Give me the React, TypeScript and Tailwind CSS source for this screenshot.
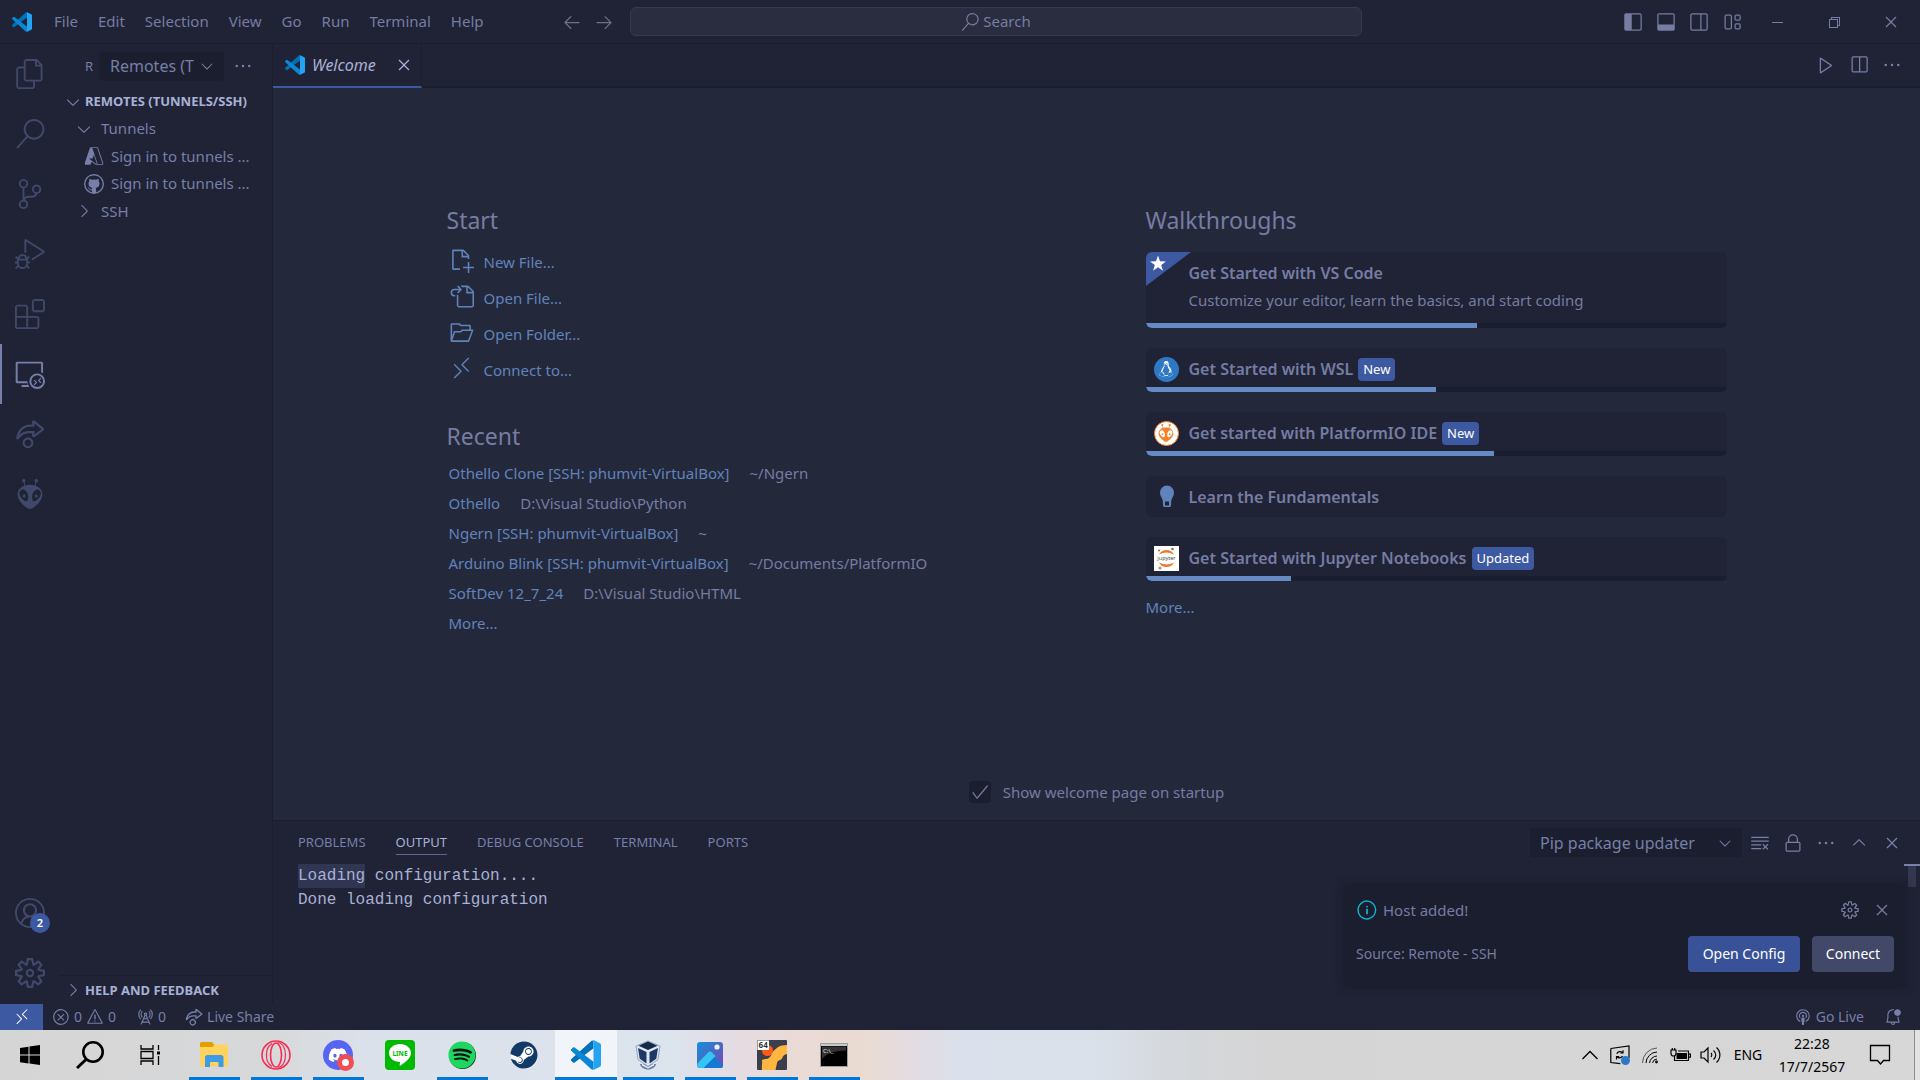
import type { ReactNode } from "react";
import {
  VscFiles, VscSearch, VscSourceControl, VscDebugAlt, VscExtensions, VscRemoteExplorer, VscLiveShare,
  VscAccount, VscSettingsGear, VscAzure, VscGithub, VscNewFile, VscGoToFile, VscFolderOpened,
  VscRemote, VscError, VscWarning, VscRadioTower, VscBroadcast, VscBellDot, VscClearAll, VscLock,
  VscEllipsis, VscChevronUp, VscChevronDown, VscChevronRight, VscClose, VscInfo, VscGear, VscPlay,
  VscSplitHorizontal, VscLayoutSidebarLeft, VscLayoutPanel, VscLayoutSidebarRightOff, VscLayout,
  VscChromeMinimize, VscChromeRestore, VscChromeClose, VscArrowLeft, VscArrowRight, VscCheck,
} from "react-icons/vsc";
import { SiPlatformio } from "react-icons/si";
import { FaSpotify, FaSteam, FaDiscord, FaLinux } from "react-icons/fa";

function CodeLogo({ className }: { className: string }) {
  return (
    <svg viewBox="0 0 24 24" className={className} aria-hidden="true">
      <path fill="#0070b8" d="M18 .6V6.55L2.93 18a1 1 0 0 1-1.28-.06L.33 16.74a1 1 0 0 1 0-1.48L16.5.5Z" />
      <path fill="#0a87d4" d="M18 23.4V17.45L2.93 6a1 1 0 0 0-1.28.06L.33 7.26a1 1 0 0 0 0 1.48L16.5 23.5Z" />
      <path fill="#23a4f2" d="M16.5.5a1.5 1.5 0 0 1 1.7-.29l4.95 2.38A1.5 1.5 0 0 1 24 3.94v16.12a1.5 1.5 0 0 1-.85 1.35L18.2 23.8a1.5 1.5 0 0 1-1.7-.3A.88.88 0 0 0 18 22.9V1.1A.88.88 0 0 0 16.5.5Z" />
    </svg>
  );
}

const menus = ["File", "Edit", "Selection", "View", "Go", "Run", "Terminal", "Help"];

function TitleBar() {
  return (
    <header className="grid h-11 shrink-0 grid-cols-[1fr_732px_558px] items-center border-b border-[#1b1e2e] text-[#767ca2]">
      <div className="flex items-center">
        <CodeLogo className="ml-3 mr-3 size-5" />
        <nav className="flex text-[15px]" aria-label="Menu">
          {menus.map((m) => (
            <button key={m} type="button" className="px-[10px]">{m}</button>
          ))}
        </nav>
        <div className="ml-auto mr-4 flex gap-3 text-xl text-[#6f7080]">
          <button type="button" aria-label="Back"><VscArrowLeft /></button>
          <button type="button" aria-label="Forward"><VscArrowRight /></button>
        </div>
      </div>
      <button type="button" className="flex h-[29px] items-center justify-center gap-1 rounded-md border border-[#363a50] bg-[#2a2d40] text-[15px]">
        <VscSearch className="text-lg" /> Search
      </button>
      <div className="flex items-center justify-end text-xl">
        <div className="mr-[6px] flex gap-[13px]">
          <button type="button" aria-label="Toggle primary side bar"><VscLayoutSidebarLeft /></button>
          <button type="button" aria-label="Toggle panel"><VscLayoutPanel /></button>
          <button type="button" aria-label="Toggle secondary side bar"><VscLayoutSidebarRightOff /></button>
          <button type="button" aria-label="Customize layout"><VscLayout /></button>
        </div>
        <button type="button" aria-label="Minimize" className="flex w-[57px] justify-center"><VscChromeMinimize className="text-base" /></button>
        <button type="button" aria-label="Restore" className="flex w-[57px] justify-center"><VscChromeRestore className="text-base" /></button>
        <button type="button" aria-label="Close" className="flex w-[58px] justify-center"><VscChromeClose className="text-base" /></button>
      </div>
    </header>
  );
}

const views = [
  { label: "Explorer", icon: <VscFiles /> },
  { label: "Search", icon: <VscSearch /> },
  { label: "Source Control", icon: <VscSourceControl /> },
  { label: "Run and Debug", icon: <VscDebugAlt /> },
  { label: "Extensions", icon: <VscExtensions /> },
  { label: "Remote Explorer", icon: <VscRemoteExplorer />, active: true },
  { label: "Live Share", icon: <VscLiveShare /> },
  { label: "PlatformIO", icon: <SiPlatformio /> },
];

function ActivityBar() {
  return (
    <nav className="flex w-[60px] shrink-0 flex-col text-3xl text-[#41496b]" aria-label="Views">
      {views.map((v) => (
        <button
          key={v.label}
          type="button"
          aria-label={v.label}
          className={v.active
            ? "flex h-[60px] items-center justify-center border-x-2 border-l-[#787fa8] border-r-transparent text-[#787fa8]"
            : "flex h-[60px] items-center justify-center"}
        >
          {v.icon}
        </button>
      ))}
      <button type="button" aria-label="Accounts" className="relative mt-auto flex h-[60px] items-center justify-center">
        <VscAccount />
        <span className="absolute right-[10px] bottom-[10px] flex size-5 items-center justify-center rounded-full bg-[#3d59a1] text-[11px] font-semibold text-white">2</span>
      </button>
      <button type="button" aria-label="Manage" className="mb-px flex h-[60px] items-center justify-center"><VscSettingsGear /></button>
    </nav>
  );
}

function SideBar() {
  return (
    <aside className="flex w-[212px] shrink-0 flex-col text-[15px] text-[#787fa8]">
      <div className="flex h-11 items-center pl-[25px]">
        <span className="w-[14px] text-[13px]">R</span>
        <div className="relative flex h-[29px] w-[125px] items-center">
          <select aria-label="Remote type" className="h-full w-full appearance-none overflow-hidden rounded-sm bg-[#1b1e2e] pr-[30px] pl-[11px] text-base">
            <option>Remotes (Tunnels/SSH)</option>
          </select>
          <VscChevronDown className="pointer-events-none absolute right-2 text-lg" />
        </div>
        <button type="button" aria-label="More actions" className="ml-[9px] text-xl"><VscEllipsis /></button>
      </div>
      <button type="button" className="flex h-[27px] items-center text-[13px] font-bold whitespace-nowrap text-[#a9b1d6]">
        <VscChevronDown className="mr-[2px] ml-[3px] text-xl text-[#787fa8]" />
        REMOTES (TUNNELS/SSH)
      </button>
      <ul className="grid h-[110px] grid-rows-4">
        <li className="flex items-center pl-[14px]"><VscChevronDown className="mr-[7px] text-xl" />Tunnels</li>
        <li className="flex items-center gap-[7px] pl-6"><VscAzure className="text-xl" />Sign in to tunnels ...</li>
        <li className="flex items-center gap-[7px] pl-6"><VscGithub className="text-xl" />Sign in to tunnels ...</li>
        <li className="flex items-center pl-[14px]"><VscChevronRight className="mr-[7px] text-xl" />SSH</li>
      </ul>
      <button type="button" className="mt-auto flex h-[29px] items-center border-t border-[#1b1e2e] text-[13px] font-bold text-[#a9b1d6]">
        <VscChevronRight className="mr-[2px] ml-[3px] text-xl text-[#787fa8]" />
        HELP AND FEEDBACK
      </button>
    </aside>
  );
}

function EditorTabs() {
  return (
    <div className="flex h-11 shrink-0 border-b-2 border-[#1b1e2e]">
      <div className="-mb-[2px] flex w-[149px] items-center border-r border-b-2 border-r-[#1b1e2e] border-b-[#3d59a1] pl-3 text-[#a9b1d6]">
        <CodeLogo className="mr-[7px] size-5" />
        <span className="text-base italic">Welcome</span>
        <button type="button" aria-label="Close tab" className="mr-[7px] ml-auto text-xl"><VscClose /></button>
      </div>
      <div className="ml-auto flex items-center gap-[13px] pr-[18px] text-xl text-[#787fa8]">
        <button type="button" aria-label="Run"><VscPlay /></button>
        <button type="button" aria-label="Split editor"><VscSplitHorizontal /></button>
        <button type="button" aria-label="More"><VscEllipsis /></button>
      </div>
    </div>
  );
}

const startItems = [
  { label: "New File...", icon: <VscNewFile /> },
  { label: "Open File...", icon: <VscGoToFile /> },
  { label: "Open Folder...", icon: <VscFolderOpened /> },
  { label: "Connect to...", icon: <VscRemote /> },
];

const recents = [
  ["Othello Clone [SSH: phumvit-VirtualBox]", "~/Ngern"],
  ["Othello", "D:\\Visual Studio\\Python"],
  ["Ngern [SSH: phumvit-VirtualBox]", "~"],
  ["Arduino Blink [SSH: phumvit-VirtualBox]", "~/Documents/PlatformIO"],
  ["SoftDev 12_7_24", "D:\\Visual Studio\\HTML"],
];

function Bulb() {
  return (
    <svg viewBox="0 0 25 25" className="size-[25px]" aria-hidden="true">
      <path fill="#6183bb" d="M13 1.500a7 7 0 0 1 7 7.300c0 3-1.700 4.700-2.700 7.500L17 21.500a1.500 1.500 0 0 1-1.500 1.500h-5A1.500 1.500 0 0 1 9 21.500l-.300-5.200C7.700 13.500 6 11.800 6 8.800a7 7 0 0 1 7-7.300Z" />
      <path fill="#1f2335" d="M11 17.500h4v4h-4z" />
    </svg>
  );
}

function JupyterLogo() {
  return (
    <svg viewBox="0 0 25 25" className="size-[25px]" aria-hidden="true">
      <path fill="#fff" d="M0 0h25v25H0z" />
      <path fill="#f37726" d="M5 8.500a8.500 8.500 0 0 1 15 0Q12.500 4.500 5 8.500ZM5 16.500a8.500 8.500 0 0 0 15 0Q12.500 20.500 5 16.500Z" />
      <circle cx="18.500" cy="3" r="1.300" fill="#767677" />
      <circle cx="6" cy="22" r="1.600" fill="#9e9e9e" />
      <circle cx="5" cy="4.500" r=".9" fill="#616262" />
      <text x="12.500" y="14.200" fontSize="5.500" textAnchor="middle" fill="#4e4e4e">jupyter</text>
    </svg>
  );
}

const walkthroughs: { title: string; icon: ReactNode; badge?: string; progress?: number }[] = [
  { title: "Get Started with WSL", badge: "New", progress: 50,
    icon: <span className="flex size-[25px] items-center justify-center rounded-full bg-[#2f78c4] text-base text-white"><FaLinux /></span> },
  { title: "Get started with PlatformIO IDE", badge: "New", progress: 60,
    icon: <span className="flex size-[25px] items-center justify-center rounded-full border border-[#f5822a] bg-white text-lg text-[#f5822a]"><SiPlatformio /></span> },
  { title: "Learn the Fundamentals", icon: <Bulb /> },
  { title: "Get Started with Jupyter Notebooks", badge: "Updated", progress: 25, icon: <JupyterLogo /> },
];

function Progress({ value }: { value: number }) {
  return (
    <div className="h-[5px] bg-[#1b1e2e]">
      <div className="h-full bg-[#668ac4]" style={{ width: `${value}%` }} />
    </div>
  );
}

function Welcome() {
  return (
    <main className="flex min-h-0 flex-1 flex-col bg-[#24283b] text-[15px] text-[#767ca2]">
      <div className="flex flex-1 pr-5">
        <div className="mx-auto grid w-full max-w-[1280px] grid-cols-2 content-start gap-[118px] pt-[114px]">
          <div>
            <h2 className="h-9 text-[23px] leading-9">Start</h2>
            <ul className="mt-[10px] mb-6">
              {startItems.map((s) => (
                <li key={s.label} className="h-9">
                  <button type="button" className="flex items-center gap-[10px] pl-[2px] text-[#6183bb]">
                    <span className="text-[25px]">{s.icon}</span>
                    <span className="pt-1">{s.label}</span>
                  </button>
                </li>
              ))}
            </ul>
            <h2 className="mt-[26px] h-9 text-[23px] leading-9">Recent</h2>
            <ul className="mt-1 pl-[2px] leading-[30px]">
              {recents.map(([name, path]) => (
                <li key={name}>
                  <a href="#" className="mr-5 text-[#6183bb]">{name}</a>
                  <span>{path}</span>
                </li>
              ))}
              <li><a href="#" className="text-[#6183bb]">More...</a></li>
            </ul>
          </div>
          <div>
            <h2 className="h-9 text-[23px] leading-9">Walkthroughs</h2>
            <div className="mt-[14px] flex flex-col gap-5">
              <button type="button" className="relative overflow-hidden rounded-md bg-[#1f2335] text-left">
                <svg viewBox="0 0 45 34" className="absolute top-0 left-0 h-[34px] w-[45px]" aria-hidden="true">
                  <path fill="#3d59a1" d="M0 0h45L0 34Z" />
                  <path fill="#fff" d="m12 3.500 2 5.800 6 .1-4.800 3.600 1.700 5.800-4.900-3.500-4.900 3.500 1.700-5.800L4 9.400l6-.1Z" />
                </svg>
                <div className="h-[71px] pt-[9px] pl-[43px]">
                  <h3 className="text-base leading-6 font-semibold">Get Started with VS Code</h3>
                  <p className="mt-[3px] leading-6">Customize your editor, learn the basics, and start coding</p>
                </div>
                <Progress value={57} />
              </button>
              {walkthroughs.map((w) => (
                <button key={w.title} type="button" className="overflow-hidden rounded-md bg-[#1f2335] text-left">
                  <div className={w.progress ? "flex h-[39px] items-center pt-[3px] pl-2" : "flex h-[41px] items-center pl-2"}>
                    {w.icon}
                    <h3 className="ml-[10px] text-base font-semibold">{w.title}</h3>
                    {w.badge && <span className="ml-[5px] rounded bg-[#3d59a1] px-[5px] text-[13px] leading-[23px] text-white">{w.badge}</span>}
                  </div>
                  {w.progress && <Progress value={w.progress} />}
                </button>
              ))}
            </div>
            <a href="#" className="mt-[14px] block leading-6 text-[#6183bb]">More...</a>
          </div>
        </div>
      </div>
      <label className="mb-4 flex h-6 items-center justify-center gap-3">
        <span className="relative flex size-[22px] items-center justify-center">
          <input type="checkbox" defaultChecked className="size-[22px] appearance-none rounded bg-[#1b1e2e]" />
          <VscCheck className="pointer-events-none absolute text-xl" />
        </span>
        Show welcome page on startup
      </label>
    </main>
  );
}

const panelTabs = ["PROBLEMS", "OUTPUT", "DEBUG CONSOLE", "TERMINAL", "PORTS"];

function Toast() {
  return (
    <div role="status" className="absolute right-[14px] bottom-4 w-[562px] rounded bg-[#1b1e2e] pt-[14px] pr-3 pb-4 pl-3 text-[#767ca2] shadow-[0_0_8px_#16161e80]">
      <div className="flex h-6 items-center text-[15px]">
        <VscInfo className="mr-[5px] text-[22px] text-[#0db9d7]" />
        Host added!
        <button type="button" aria-label="Notification settings" className="ml-auto text-xl"><VscGear /></button>
        <button type="button" aria-label="Dismiss" className="mr-[2px] ml-3 text-xl"><VscClose /></button>
      </div>
      <div className="mt-[14px] flex h-9 items-center gap-3 text-sm">
        <span className="mr-auto">Source: Remote - SSH</span>
        <button type="button" className="h-9 w-[112px] rounded-sm bg-[#395297] text-white">Open Config</button>
        <button type="button" className="h-9 w-[82px] rounded-sm bg-[#414868] text-white">Connect</button>
      </div>
    </div>
  );
}

function Panel() {
  return (
    <section className="relative flex h-[184px] shrink-0 flex-col border-t border-[#1b1e2e]" aria-label="Panel">
      <div className="flex h-[43px] shrink-0 items-center pl-[25px] text-[13px] text-[#787fa8]">
        <div className="flex gap-[30px]">
          {panelTabs.map((t) => (
            <button
              key={t}
              type="button"
              className={t === "OUTPUT" ? "border-b border-[#5c678f] py-1 text-[#a9b1d6]" : "border-b border-transparent py-1"}
            >
              {t}
            </button>
          ))}
        </div>
        <div className="relative mr-2 ml-auto flex h-[29px] w-[212px] items-center">
          <select aria-label="Output channel" className="h-full w-full appearance-none rounded-sm bg-[#1b1e2e] pl-[10px] text-base">
            <option>Pip package updater</option>
          </select>
          <VscChevronDown className="pointer-events-none absolute right-2 text-lg" />
        </div>
        <div className="flex gap-[13px] pr-[18px] text-xl">
          <button type="button" aria-label="Clear output"><VscClearAll /></button>
          <button type="button" aria-label="Lock scrolling"><VscLock /></button>
          <button type="button" aria-label="More"><VscEllipsis /></button>
          <button type="button" aria-label="Maximize panel"><VscChevronUp /></button>
          <button type="button" aria-label="Close panel"><VscClose /></button>
        </div>
      </div>
      <div className="flex flex-1">
        <div className="flex-1 pl-[25px] font-['Liberation_Mono',monospace] text-base leading-6 whitespace-pre text-[#a9b1d6]">
          <div className="flex">
            <span className="bg-[#303552]">Loading</span>
            <span>{" configuration...."}</span>
          </div>
          <div>Done loading configuration</div>
        </div>
        <div className="flex w-4 flex-col items-center border-t-2 border-[#7a81a8]">
          <div className="h-[21px] w-2 bg-[#33374f]" />
        </div>
      </div>
      <Toast />
    </section>
  );
}

function StatusBar() {
  return (
    <footer className="flex h-[26px] shrink-0 items-center bg-[#1f2335] text-sm text-[#787fa8]">
      <button type="button" aria-label="Remote host" className="flex h-full w-[43px] items-center justify-center bg-[#3d59a1] text-lg text-white"><VscRemote /></button>
      <button type="button" className="ml-[9px] flex items-center"><VscError className="mr-1 text-lg" />0<VscWarning className="mx-1 text-lg" />0</button>
      <button type="button" className="ml-5 flex items-center"><VscRadioTower className="mr-1 text-lg" />0</button>
      <button type="button" className="ml-[19px] flex items-center"><VscLiveShare className="mr-1 text-lg" />Live Share</button>
      <button type="button" className="mr-5 ml-auto flex items-center"><VscBroadcast className="mr-1 text-lg" />Go Live</button>
      <button type="button" aria-label="Notifications" className="mr-[18px] text-lg"><VscBellDot /></button>
    </footer>
  );
}

const apps: { name: string; icon: ReactNode; open?: boolean; active?: boolean }[] = [
  { name: "File Explorer", open: true, icon: (
    <svg viewBox="0 0 28 26" className="h-[26px] w-7">
      <path fill="#e0a100" d="M0 1.500A1.500 1.500 0 0 1 1.500 0H12l2 2.500V8H0Z" />
      <path fill="#ffd35c" d="M0 5h12.500L14.500 2.500H26.500A1.500 1.500 0 0 1 28 4v19a1.500 1.500 0 0 1-1.500 1.500h-25A1.500 1.500 0 0 1 0 23Z" />
      <path fill="#3f9be8" d="M5 15.500A2.500 2.500 0 0 1 7.500 13h13.500a2.500 2.500 0 0 1 2.500 2.500V25h-5v-4a1 1 0 0 0-1-1H11a1 1 0 0 0-1 1v4H5Z" />
    </svg>
  ) },
  { name: "Opera GX", open: true, icon: (
    <svg viewBox="0 0 30 30" className="size-[30px]" fill="none" stroke="#fa2a55">
      <circle cx="15" cy="15" r="14" strokeWidth="1.600" />
      <ellipse cx="15" cy="15" rx="5.500" ry="12" strokeWidth="1.600" />
      <path strokeWidth="1.200" d="M11 3.500C3.500 8 3.500 22 11 26.500M17 2.500c10 1 10 24 0 25" />
    </svg>
  ) },
  { name: "Discord", open: true, icon: (
    <span className="relative flex size-[30px] items-center justify-center rounded-full bg-[#5865f2] text-xl text-white">
      <FaDiscord />
      <span className="absolute -right-[1px] -bottom-[1px] size-[17px] rounded-full border-[5px] border-[#ed4f55] bg-white" />
    </span>
  ) },
  { name: "LINE", icon: (
    <svg viewBox="0 0 30 30" className="size-[30px]">
      <rect width="30" height="30" rx="4" fill="#00b900" />
      <path fill="#fff" d="M15 4c6.300 0 11 4 11 9 0 4.500-4.500 8.500-10.500 12.500-.8.500-1 .1-.8-.8l.3-2.700C8.700 22 4 18 4 13s4.700-9 11-9Z" />
      <text x="15" y="15.800" fontSize="6.500" fontWeight="700" textAnchor="middle" fill="#00b900">LINE</text>
    </svg>
  ) },
  { name: "Spotify", open: true, icon: <span className="flex size-[27px] items-center justify-center rounded-full bg-[#101010] text-[28px] text-[#1ed760]"><FaSpotify className="shrink-0" /></span> },
  { name: "Steam", icon: <span className="flex size-[27px] items-center justify-center rounded-full bg-white text-[28px] text-[#123a66]"><FaSteam className="shrink-0" /></span> },
  { name: "Visual Studio Code", open: true, active: true, icon: <CodeLogo className="size-[30px]" /> },
  { name: "VirtualBox", open: true, icon: (
    <svg viewBox="0 0 26 30" className="h-[30px] w-[26px]">
      <path fill="#6c7fa6" d="M13 29.500c-4 0-7.500-2.500-8-5.500h16c-.5 3-4 5.500-8 5.500Z" />
      <path fill="#e6ebf4" d="m7 23.500 6 3.500 6-3.500v2l-6 3-6-3Z" />
      <path fill="#dfe6f2" stroke="#7486aa" strokeWidth=".7" d="M13 1 25 6l-2 13.500L13 26.500 3 19.500 1 6Z" />
      <path fill="#14284a" d="m13 1.500 9.500 4.300-9.500 4.200-9.500-4.200Z" />
      <path fill="#1d3a66" d="m3 8 8.500 4v11.500L4.700 18.700ZM23 8l-8.500 4v11.500l6.800-4.800Z" />
    </svg>
  ) },
  { name: "Photos", open: true, icon: (
    <svg viewBox="0 0 26 26" className="size-[26px]">
      <defs><linearGradient id="photo" x1="0" y1="0" x2="1" y2="1"><stop stopColor="#1590d8" /><stop offset="1" stopColor="#7a46b5" /></linearGradient></defs>
      <rect width="26" height="26" rx="3" fill="url(#photo)" />
      <path fill="#1678d4" d="M17 14l9 9v1a2 2 0 0 1-2 2H6Z" />
      <path fill="#35c5f4" d="M1 21 11 10.500a3 3 0 0 1 4 0L18.500 14 6.500 26H3a3 3 0 0 1-3-3Z" />
      <circle cx="20" cy="5" r="2.600" fill="#eaf4fc" />
    </svg>
  ) },
  { name: "UltiMaker", open: true, icon: (
    <svg viewBox="0 0 30 30" className="size-[30px]">
      <rect width="30" height="30" rx="1" fill="#3b3e4b" />
      <circle cx="10.500" cy="10.500" r="5.500" fill="#ff5a1c" />
      <path fill="#ffb640" d="M30 5v9c-3 .5-4 2-5 4.500-1.500 2-4.500 1.500-5 4.500l-1.500 7H5c-.5-3 .5-7 0-10 3-1.500 6-.5 8-3s2-5 4.500-7S22 5 30 5Z" />
      <rect x=".5" y=".5" width="11.500" height="9.500" fill="#fff" />
      <text x="6.200" y="8.200" fontSize="8" fontWeight="700" textAnchor="middle" fill="#333">64</text>
    </svg>
  ) },
  { name: "Command Prompt", open: true, icon: (
    <svg viewBox="0 0 28 28" className="size-7">
      <rect x=".5" y="2.500" width="27" height="23" fill="#000" stroke="#9b9fa3" />
      <path fill="#c4c8cc" d="M1 3h26v2H1Z" />
      <path fill="#333" d="M2 5.500h24v4C14 10 7 12 2 18Z" />
      <text x="3" y="12" fontSize="6" fill="#e8e8e8">C:\_</text>
    </svg>
  ) },
];

function Tray() {
  return (
    <div className="ml-auto flex items-center text-black">
      <button type="button" aria-label="Show hidden icons" className="flex w-[31px] justify-center">
        <svg viewBox="0 0 16 10" className="h-[10px] w-4" fill="none" stroke="currentColor" strokeWidth="1.300"><path d="M.5 9 8 1.500 15.500 9" /></svg>
      </button>
      <button type="button" aria-label="Update" className="flex w-[30px] justify-center">
        <svg viewBox="0 0 20 20" className="size-5" fill="none" stroke="currentColor" strokeWidth="1.200">
          <path d="M.8 3.500 19 1v12M.8 3.500V17.500l9.500 1.200M6.800 8.800a3.500 3.500 0 0 1 6-1M13 5.200v2.800h-2.800M12.500 11a3.500 3.500 0 0 1-5.700.8M6.500 14.500v-2.800h2.800" />
          <circle cx="15.500" cy="15.500" r="4.500" fill="#2a78c8" stroke="none" />
        </svg>
      </button>
      <button type="button" aria-label="Network" className="flex w-[30px] justify-center">
        <svg viewBox="0 0 18 18" className="size-[18px]" fill="none" stroke="currentColor" strokeWidth="1">
          <path d="M1.500 17A15 15 0 0 1 16 2" opacity=".6" /><path d="M5 17A11.500 11.500 0 0 1 16 6" /><path d="M8.500 17A8 8 0 0 1 16 10" /><path d="M11.500 17A5 5 0 0 1 16 13" />
          <circle cx="15.500" cy="16" r="1.400" fill="currentColor" stroke="none" />
        </svg>
      </button>
      <button type="button" aria-label="Battery" className="flex w-[30px] justify-center">
        <svg viewBox="0 0 21 16" className="h-4 w-[21px]" fill="none" stroke="currentColor" strokeWidth="1.200">
          <path d="M8 4h10.500v9.500h-14V9M19 7.200h1.500v3H19" /><path fill="currentColor" stroke="none" d="M6.500 6h10.500v6H6.500Z" />
          <path fill="#d6d6d7" d="M1 3h5v3.500a2.500 2.500 0 0 1-5 0ZM2.300 1v2M4.700 1v2" />
        </svg>
      </button>
      <button type="button" aria-label="Volume" className="flex w-[30px] justify-center">
        <svg viewBox="0 0 21 18" className="h-[18px] w-[21px]" fill="none" stroke="currentColor" strokeWidth="1.200">
          <path d="M1 6h3l4-4v14l-4-4H1Z" /><path d="M11 7c1 1 1 3 0 4M13.500 4.500c3 2.500 3 6.500 0 9M16.500 1.500c4.500 4 4.500 11 0 15" />
        </svg>
      </button>
      <button type="button" className="w-[46px] text-sm">ENG</button>
      <button type="button" className="w-[82px] text-center text-sm leading-[23px]">22:28<br />17/7/2567</button>
      <button type="button" aria-label="Action centre" className="flex w-[38px] justify-end">
        <svg viewBox="0 0 22 22" className="size-[22px]" fill="none" stroke="currentColor" strokeWidth="1.300"><path d="M1.500 1.500h19v15h-6l-3 3.500-3-3.500h-7Z" /></svg>
      </button>
      <button type="button" aria-label="Show desktop" className="ml-[23px] h-[50px] w-[6px] border-l border-[#8c8c8c] bg-[#e2e2e3]" />
    </div>
  );
}

function Taskbar() {
  return (
    <nav
      aria-label="Taskbar"
      className="flex h-[50px] shrink-0 bg-[linear-gradient(90deg,#d5d5d6_0%,#d7d8d9_14%,#dbe1ea_19%,#dce4ee_35%,#e4dce4_38%,#e9dad6_41%,#e9dbd2_45%,#e2dce4_48%,#dbe1ec_50%,#dae1ea_57%,#d4d7da_62%,#d5d5d6_66%,#d7d7d8_100%)]"
    >
      <button type="button" aria-label="Start" className="flex w-[60px] items-center justify-center">
        <svg viewBox="0 0 20 20" className="size-5"><path d="M0 3l8.500-1.300V9.600H0ZM9.500 1.500 20 0v9.600H9.500ZM0 10.500h8.500v7.900L0 17.200ZM9.500 10.500H20V20L9.500 18.600Z" /></svg>
      </button>
      <button type="button" aria-label="Search" className="flex w-[60px] items-center justify-center">
        <svg viewBox="0 0 28 28" className="size-7" fill="none" stroke="#000" strokeWidth="2.600"><circle cx="17" cy="11" r="9.700" /><path d="M10.500 18 1 27" strokeWidth="3" /></svg>
      </button>
      <button type="button" aria-label="Task view" className="flex w-[60px] items-center justify-center">
        <svg viewBox="0 0 20 20" className="size-5" fill="none" stroke="#000" strokeWidth="1.300"><path d="M1 0v4h12V0M1 20v-4h12v4M1 6.500h12v7H1ZM18.500 0v5M18.500 11v9" /><path d="M17 6.500h3v3h-3Z" fill="#000" stroke="none" /></svg>
      </button>
      <div className="ml-[3px] flex">
        {apps.map((a) => (
          <button
            key={a.name}
            type="button"
            aria-label={a.name}
            className={a.active ? "flex w-[62px] flex-col items-center bg-[#f1f4f9]" : "flex w-[62px] flex-col items-center"}
          >
            <span className="flex h-[47px] items-center pt-[3px]">{a.icon}</span>
            {a.open && <span className={a.active ? "h-[3px] w-full bg-[#0078d7]" : "h-[3px] w-[51px] bg-[#0078d7]"} />}
          </button>
        ))}
      </div>
      <Tray />
    </nav>
  );
}

export default function App() {
  return (
    <div className="flex h-screen flex-col bg-[#1f2335] font-['Noto_Sans','Open_Sans',sans-serif] leading-tight">
      <TitleBar />
      <div className="flex min-h-0 flex-1">
        <ActivityBar />
        <SideBar />
        <div className="flex min-w-0 flex-1 flex-col border-l border-[#1b1e2e]">
          <EditorTabs />
          <Welcome />
          <Panel />
        </div>
      </div>
      <StatusBar />
      <Taskbar />
    </div>
  );
}
